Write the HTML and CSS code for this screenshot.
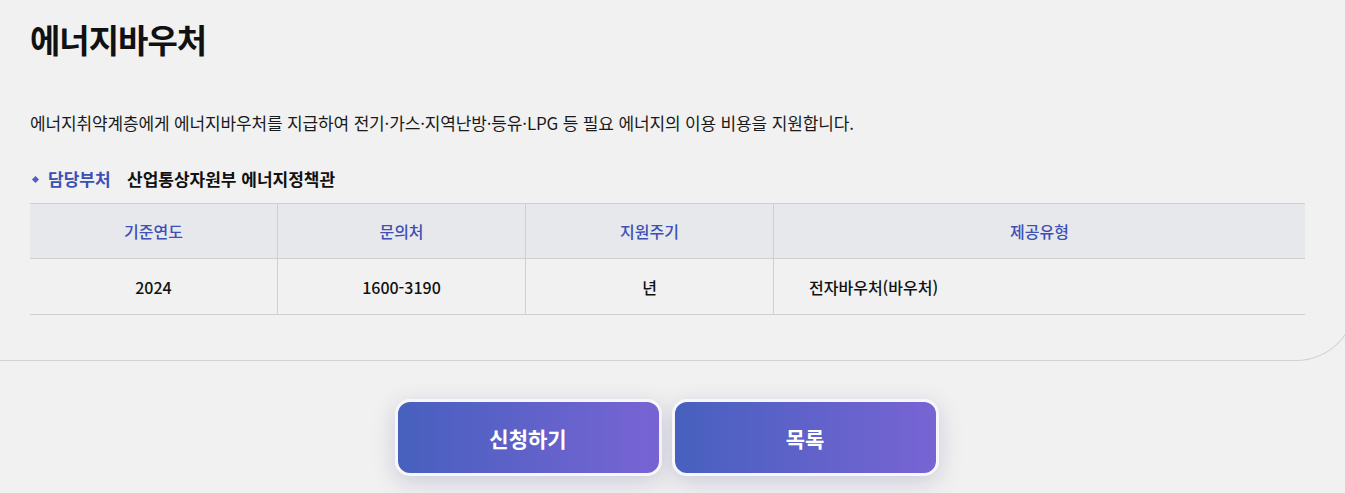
FILE: index.html
```html
<!DOCTYPE html>
<html lang="ko">
<head>
    <meta charset="UTF-8">
    <meta name="viewport" content="width=device-width, initial-scale=1.0">
    <title>에너지바우처</title>
    <link rel="stylesheet" href="styles.css">
</head>
<body>
    <div class="card">
        <h1 class="title">에너지바우처</h1>
        <p class="desc">에너지취약계층에게 에너지바우처를 지급하여 전기·가스·지역난방·등유·LPG 등 필요 에너지의 이용 비용을 지원합니다.</p>
        <div class="dept">
            <span class="dept-label">담당부처</span>
            <span class="dept-value">산업통상자원부 에너지정책관</span>
        </div>
        <table class="info">
            <thead>
                <tr>
                    <th class="col-s">기준연도</th>
                    <th class="col-s">문의처</th>
                    <th class="col-s">지원주기</th>
                    <th>제공유형</th>
                </tr>
            </thead>
            <tbody>
                <tr>
                    <td>2024</td>
                    <td>1600-3190</td>
                    <td>년</td>
                    <td class="left">전자바우처(바우처)</td>
                </tr>
            </tbody>
        </table>
    </div>
    <div class="actions">
        <button class="btn">신청하기</button>
        <button class="btn">목록</button>
    </div>
</body>
</html>
```

FILE: styles.css
```css
body {
    margin: 0;
    background-color: #f1f1f1;
    font-family: "Noto Sans CJK KR", "Noto Sans", sans-serif;
    color: #111;
    overflow: hidden;
}
.card {
    width: 1356px;
    box-sizing: border-box;
    padding: 14px 50px 45px 30px;
    border-bottom: 1px solid #d3d3d3;
    border-right: 1px solid #d3d3d3;
    border-bottom-right-radius: 60px;
}
.title {
    margin: 0;
    font-size: 33px;
    font-weight: 700;
    line-height: 50px;
    letter-spacing: -1px;
}
.desc {
    margin: 47px 0 0;
    font-size: 17px;
    line-height: 24px;
    letter-spacing: -0.15px;
    color: #1a1a1a;
}
.dept {
    margin-top: 32px;
    display: flex;
    align-items: center;
    font-size: 17px;
    font-weight: 700;
    line-height: 24px;
}
.dept-label {
    color: #3c4fb5;
    padding-left: 18px;
    position: relative;
    width: 79px;
}
.dept-label::before {
    content: "";
    position: absolute;
    left: 3px;
    top: 10px;
    width: 5px;
    height: 5px;
    background: #4b5fc4;
    transform: rotate(45deg);
}
.info {
    margin-top: 12px;
    width: 100%;
    border-collapse: collapse;
    font-size: 16px;
}
.info th, .info td {
    border-top: 1px solid #cfcfcf;
    border-bottom: 1px solid #cfcfcf;
    border-left: 1px solid #cfcfcf;
    height: 55px;
    padding: 0;
    text-align: center;
}
.info th {
    height: 54px;
    background: #e7e8eb;
    color: #3d50b8;
    font-weight: 500;
}
.info th:first-child, .info td:first-child {
    border-left: none;
}
.info td {
    font-weight: 500;
    color: #111;
}
.info .col-s {
    width: 247px;
}
.info td.left {
    text-align: left;
    padding-left: 35px;
}
.actions {
    display: flex;
    justify-content: center;
    gap: 10px;
    margin-top: 38px;
    padding: 0 12px 30px 0;
}
.btn {
    width: 267px;
    height: 77px;
    border: 3px solid #f7f7fb;
    border-radius: 15px;
    background: linear-gradient(90deg, #4760be, #7864d4);
    color: #fff;
    font-family: inherit;
    font-size: 21px;
    font-weight: 700;
    box-shadow: 0 6px 22px rgba(90, 90, 150, 0.25);
    cursor: pointer;
}
```
